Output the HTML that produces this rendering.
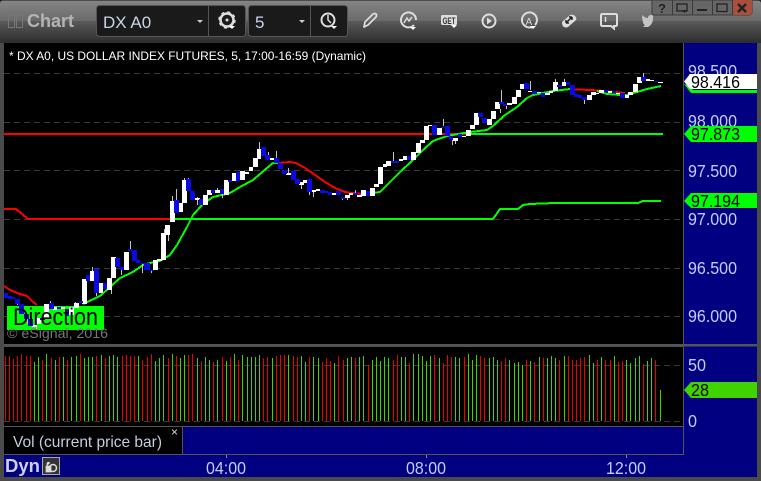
<!DOCTYPE html>
<html><head><meta charset="utf-8"><style>
html,body{margin:0;padding:0;background:#3a3a3a}
svg{display:block}
text{font-family:"Liberation Sans",sans-serif}
</style></head><body>
<svg width="761" height="481" viewBox="0 0 761 481" xmlns="http://www.w3.org/2000/svg">
<defs>
<linearGradient id="t1" x1="0" y1="0" x2="0" y2="1"><stop offset="0" stop-color="#868686"/><stop offset="1" stop-color="#6a6a6a"/></linearGradient>
<linearGradient id="t2" x1="0" y1="0" x2="0" y2="1"><stop offset="0" stop-color="#5a5a5a"/><stop offset="1" stop-color="#2c2c2c"/></linearGradient>
</defs>
<rect width="761" height="481" fill="#4a4a4a"/>
<rect y="0" width="761" height="21" fill="url(#t1)"/>
<rect y="21" width="761" height="22" fill="url(#t2)"/>
<rect y="0" width="761" height="1" fill="#4c4c4c"/>
<path d="M0 0h4q-4 0-4 4z" fill="#222"/>
<path d="M761 0h-4q4 0 4 4z" fill="#222"/>
<!-- main areas -->
<rect x="4" y="43" width="679" height="302" fill="#000"/>
<rect x="684" y="43" width="73" height="434" fill="#000080"/>
<rect x="4" y="347" width="679" height="79" fill="#000"/>
<rect x="4" y="427" width="178" height="27" fill="#000"/>
<rect x="183" y="427" width="500" height="27" fill="#000080"/>
<rect x="4" y="455" width="753" height="22" fill="#000080"/>
<rect x="4" y="344" width="753" height="2.500" fill="#555"/>
<g fill="#555"><rect x="683" y="43" width="1" height="412"/><rect x="4" y="426" width="680" height="1"/><rect x="182" y="427" width="1" height="27"/><rect x="4" y="454" width="680" height="1"/></g>
<g fill="#888"><rect x="226" y="455" width="1" height="3"/><rect x="426" y="455" width="1" height="3"/><rect x="626" y="455" width="1" height="3"/></g>
<!-- gridlines -->
<g stroke="#3a3a3a" stroke-width="1" stroke-dasharray="6 4" shape-rendering="crispEdges">
<path d="M4 73.500H683M4 122.500H683M4 170.500H683M4 219.500H683M4 268.500H683M4 316.500H683M4 365.500H683M4 421.500H683"/>
</g>
<!-- direction label bg -->
<rect x="7" y="306" width="97" height="24" fill="#00ff00"/>
<!-- MA lines -->
<g fill="none" stroke-width="2" stroke-linejoin="round" shape-rendering="crispEdges">
<path stroke="#ff0000" d="M4 209H16L28 219H172"/>
<path stroke="#00ff00" d="M172 219H493L500 209H518L523 205L530 204L555 203H638L643 201H661"/>
<path stroke="#ff0000" d="M4 134H470"/>
<path stroke="#00ff00" d="M470 134H663"/>
<path stroke="#ff0000" d="M4 286L10 290L20 294L27 296L33 302L37 305"/>
<path stroke="#ff0000" d="M278 163L290 162L296 163L305 168L315 175L325 182L335 188L345 192L352 193L362 194"/>
<path stroke="#ff0000" d="M570 89L590 90L605 91L625 93"/>
<path stroke="#00ff00" d="M83 304L100 296L110 287L120 278L133 272L143 265L150 263L160 261L170 255L177 245L187 227L193 215L203 204L213 197L230 193L240 187L253 180L267 168L273 163L278 163"/>
<path stroke="#00ff00" d="M362 194L372 193L380 192L390 182L400 172L413 160L423 150L433 141L447 136L470 132L487 130L493 126L505 115L517 107L527 98L533 95L553 91L570 89"/>
<path stroke="#00ff00" d="M597 91L607 94L620 95L627 95L637 92L647 89L661 86"/>
</g>
<!-- wicks -->
<path stroke="#c4c4c4" stroke-width="1" fill="none" shape-rendering="crispEdges" d="M50.500 301V304M92.500 267V271M121.500 270V275M130.500 241V250M142.500 264V273M151.500 270V273M75.500 302V304M168.500 235V241M164.500 229V233M176.500 189V200M172.500 196V201M184.500 178V180M188.500 178V179M197.500 197V205M217.500 188V193M222.500 194V198M259.500 142V149M268.500 152V155M276.500 151V158M288.500 168V173M301.500 185V189M313.500 192V197M309.500 192V195M342.500 197V200M347.500 198V200M355.500 190V193M393.500 152V161M443.500 119V126M452.500 140V145M455.500 141V144M500.500 109V113M501.500 90V102M506.500 106V109M530.500 81V90M555.500 79V82M564.500 79V82M584.500 100V104M643.500 73V77M17.500 302V305M27.500 319V324M36.500 326V329M111.500 290V294M96.500 293V296"/>
<!-- white bodies -->
<path fill="#fff" d="M32 325h5v2h-5zM36 318h5v6h-5zM44 304h5v14h-5zM53 307h4v3h-4zM61 307h4v2h-4zM69 307h5v8h-5zM74 303h5v5h-5zM82 279h5v25h-5zM90 271h4v10h-4zM99 283h4v10h-4zM107 278h5v12h-5zM111 257h5v21h-5zM124 252h5v18h-5zM153 260h5v10h-5zM157 259h5v2h-5zM161 233h5v27h-5zM165 225h5v10h-5zM170 201h5v21h-5zM178 203h5v9h-5zM182 180h5v23h-5zM195 198h5v2h-5zM203 195h5v10h-5zM207 190h5v5h-5zM215 190h5v3h-5zM224 180h5v15h-5zM232 173h4v8h-4zM240 171h5v9h-5zM245 172h4v2h-4zM249 167h4v4h-4zM253 158h5v9h-5zM257 149h4v10h-4zM270 158h4v2h-4zM286 173h5v2h-5zM299 182h5v3h-5zM303 180h4v3h-4zM311 190h5v2h-5zM316 189h4v2h-4zM332 193h4v2h-4zM345 195h5v3h-5zM349 193h4v2h-4zM357 195h5v2h-5zM361 190h5v6h-5zM370 188h5v8h-5zM374 184h5v3h-5zM378 167h5v17h-5zM383 164h4v3h-4zM386 161h5v5h-5zM399 159h4v2h-4zM403 156h4v4h-4zM411 152h5v8h-5zM416 143h5v10h-5zM420 140h5v3h-5zM424 126h5v14h-5zM428 125h4v1h-4zM437 128h5v7h-5zM453 138h5v3h-5zM462 136h4v1h-4zM466 130h5v6h-5zM470 125h5v4h-5zM474 113h5v12h-5zM487 119h5v6h-5zM491 111h5v8h-5zM495 102h5v7h-5zM507 103h5v2h-5zM512 97h5v7h-5zM516 90h5v7h-5zM520 84h5v5h-5zM528 91h5v1h-5zM537 92h4v1h-4zM545 93h5v2h-5zM549 91h4v2h-4zM553 82h5v9h-5zM562 82h4v4h-4zM587 95h5v5h-5zM591 92h5v3h-5zM596 93h3v1h-3zM599 90h5v3h-5zM608 91h4v2h-4zM616 93h4v1h-4zM625 95h4v3h-4zM628 92h5v3h-5zM633 84h5v8h-5zM637 77h5v6h-5zM646 79h4v2h-4zM650 80h4v1h-4zM658 82h5v1h-5z"/>
<!-- blue bodies -->
<path fill="#0a0ae6" d="M4 293h4v5h-4zM8 296h4v3h-4zM12 297h3v2h-3zM15 299h5v5h-5zM19 304h5v10h-5zM24 314h5v5h-5zM28 319h5v7h-5zM40 318h5v2h-5zM49 303h5v6h-5zM57 307h4v2h-4zM65 309h4v7h-4zM79 301h4v2h-4zM86 275h4v6h-4zM94 269h5v24h-5zM103 283h4v6h-4zM115 258h5v9h-5zM120 267h4v3h-4zM128 249h4v2h-4zM132 250h5v11h-5zM136 260h4v3h-4zM140 263h5v1h-5zM144 263h6v7h-6zM150 270h4v1h-4zM174 200h5v13h-5zM186 179h5v12h-5zM190 191h5v9h-5zM199 199h4v6h-4zM211 190h4v3h-4zM220 189h4v5h-4zM228 180h4v2h-4zM236 172h4v9h-4zM261 147h5v9h-5zM265 155h5v5h-5zM274 158h5v5h-5zM278 163h5v6h-5zM282 170h5v4h-5zM291 171h5v9h-5zM295 179h5v5h-5zM307 179h5v13h-5zM320 190h5v3h-5zM324 191h4v2h-4zM328 192h4v3h-4zM336 191h5v4h-5zM341 197h4v2h-4zM354 193h4v2h-4zM366 191h4v5h-4zM391 161h8v2h-8zM407 156h4v4h-4zM432 125h5v10h-5zM445 126h5v10h-5zM441 127h4v1h-4zM449 136h4v4h-4zM458 134h4v3h-4zM478 113h5v4h-5zM482 118h5v5h-5zM499 102h5v2h-5zM503 104h4v2h-4zM524 83h5v6h-5zM532 91h5v3h-5zM541 93h4v4h-4zM557 85h5v2h-5zM566 82h4v3h-4zM570 85h5v10h-5zM574 94h5v3h-5zM578 95h4v3h-4zM582 97h5v3h-5zM604 90h4v2h-4zM612 91h4v2h-4zM620 93h5v5h-5zM641 77h5v4h-5zM654 81h4v1h-4z"/>
<!-- volume bars -->
<path stroke="#ee0000" stroke-width="1" fill="none" shape-rendering="crispEdges" d="M5.500 421V356M9.500 421V356M13.500 421V359M17.500 421V356M21.500 421V354M26.500 421V356M30.500 421V356M42.500 421V360M51.500 421V358M59.500 421V357M67.500 421V360M80.500 421V354M96.500 421V356M105.500 421V358M122.500 421V356M126.500 421V355M130.500 421V356M134.500 421V356M142.500 421V360M147.500 421V357M151.500 421V354M168.500 421V358M176.500 421V356M188.500 421V355M192.500 421V354M201.500 421V361M213.500 421V362M222.500 421V357M230.500 421V357M238.500 421V360M263.500 421V358M267.500 421V357M276.500 421V356M280.500 421V355M284.500 421V355M293.500 421V356M297.500 421V357M309.500 421V357M322.500 421V362M326.500 421V358M330.500 421V361M338.500 421V356M343.500 421V360M355.500 421V358M368.500 421V365M393.500 421V360M397.500 421V355M409.500 421V363M434.500 421V355M443.500 421V363M447.500 421V355M451.500 421V357M464.500 421V357M480.500 421V356M484.500 421V358M501.500 421V361M505.500 421V358M526.500 421V360M534.500 421V362M543.500 421V358M559.500 421V360M568.500 421V356M572.500 421V360M576.500 421V360M580.500 421V358M584.500 421V357M597.500 421V360M605.500 421V360M610.500 421V360M618.500 421V362M622.500 421V361M643.500 421V364M655.500 421V360"/>
<path stroke="#3fd400" stroke-width="1" fill="none" shape-rendering="crispEdges" d="M34.500 421V362M38.500 421V357M46.500 421V354M55.500 421V360M63.500 421V357M71.500 421V357M76.500 421V356M84.500 421V358M88.500 421V357M92.500 421V357M101.500 421V355M109.500 421V356M113.500 421V355M117.500 421V357M138.500 421V356M155.500 421V361M159.500 421V358M163.500 421V355M172.500 421V354M180.500 421V358M184.500 421V355M197.500 421V358M205.500 421V357M209.500 421V360M217.500 421V360M226.500 421V361M234.500 421V354M242.500 421V355M247.500 421V357M251.500 421V357M255.500 421V357M259.500 421V355M272.500 421V358M288.500 421V355M301.500 421V356M305.500 421V362M313.500 421V357M318.500 421V358M334.500 421V363M347.500 421V358M351.500 421V357M359.500 421V357M363.500 421V356M372.500 421V360M376.500 421V357M380.500 421V361M384.500 421V357M388.500 421V358M401.500 421V357M405.500 421V357M413.500 421V354M418.500 421V354M422.500 421V356M426.500 421V361M430.500 421V356M439.500 421V358M455.500 421V357M459.500 421V358M468.500 421V354M472.500 421V360M476.500 421V355M489.500 421V358M493.500 421V357M497.500 421V360M509.500 421V360M514.500 421V363M518.500 421V362M522.500 421V365M530.500 421V361M539.500 421V357M547.500 421V358M551.500 421V356M555.500 421V358M564.500 421V356M589.500 421V355M593.500 421V363M601.500 421V357M614.500 421V356M626.500 421V360M630.500 421V363M635.500 421V358M639.500 421V356M647.500 421V361M651.500 421V358M660.500 421V390"/>
<!-- chart text -->
<text x="9" y="60" font-size="12" fill="#fff" textLength="357" lengthAdjust="spacingAndGlyphs">* DX A0, US DOLLAR INDEX FUTURES, 5, 17:00-16:59 (Dynamic)</text>
<text x="13" y="325" font-size="24" fill="#000" textLength="85" lengthAdjust="spacingAndGlyphs">Direction</text>
<text x="7" y="338" font-size="14" fill="#777" textLength="101" lengthAdjust="spacingAndGlyphs">© eSignal, 2016</text>
<!-- price axis -->
<g font-size="17.500" fill="#c4ccf4">
<text x="688" y="77" textLength="49" lengthAdjust="spacingAndGlyphs">98.500</text>
<text x="688" y="127" textLength="49" lengthAdjust="spacingAndGlyphs">98.000</text>
<text x="688" y="177" textLength="49" lengthAdjust="spacingAndGlyphs">97.500</text>
<text x="688" y="225" textLength="49" lengthAdjust="spacingAndGlyphs">97.000</text>
<text x="688" y="274" textLength="49" lengthAdjust="spacingAndGlyphs">96.500</text>
<text x="688" y="322" textLength="49" lengthAdjust="spacingAndGlyphs">96.000</text>
<text x="688" y="371" textLength="18" lengthAdjust="spacingAndGlyphs">50</text>
<text x="688" y="427" textLength="9" lengthAdjust="spacingAndGlyphs">0</text>
<text x="206" y="474" textLength="40" lengthAdjust="spacingAndGlyphs">04:00</text>
<text x="406" y="474" textLength="40" lengthAdjust="spacingAndGlyphs">08:00</text>
<text x="606" y="474" textLength="40" lengthAdjust="spacingAndGlyphs">12:00</text>
</g>
<!-- tags -->
<path fill="#00ff00" d="M684 84L691 93H757V90H693L690 86z"/>
<path fill="#fff" d="M684 81.500L690 74H757V89H690z"/>
<text x="691" y="88" font-size="17.500" fill="#000" textLength="49" lengthAdjust="spacingAndGlyphs">98.416</text>
<path fill="#00ff00" d="M684 134L691 126H757V142H691z"/>
<text x="691" y="140" font-size="17.500" fill="#000" textLength="49" lengthAdjust="spacingAndGlyphs">97.873</text>
<path fill="#00ff00" d="M684 201L691 193H757V208H691z"/>
<text x="691" y="207" font-size="17.500" fill="#000" textLength="49" lengthAdjust="spacingAndGlyphs">97.194</text>
<path fill="#3fd400" d="M684 390L691 382H757V398H691z"/>
<text x="691" y="396" font-size="17.500" fill="#000" textLength="18" lengthAdjust="spacingAndGlyphs">28</text>
<!-- legend -->
<text x="13" y="447" font-size="16" fill="#c4cce0" textLength="149" lengthAdjust="spacingAndGlyphs">Vol (current price bar)</text>
<text x="171" y="436" font-size="12" fill="#ddd">×</text>
<text x="5" y="472" font-size="18" font-weight="bold" fill="#cdd0e8" textLength="35" lengthAdjust="spacingAndGlyphs">Dyn</text>
<rect x="42.500" y="457.500" width="17" height="17" fill="#333" stroke="#aaa"/>
<circle cx="53" cy="468" r="3.500" fill="none" stroke="#ddd" stroke-width="1.500"/><path d="M46 466h5v6h-5zM47 466v-3a2 2 0 0 1 3 0" fill="#ddd" stroke="#ddd" stroke-width=".8"/>
<!-- toolbar -->
<rect x="8.500" y="14.500" width="6" height="13" fill="none" stroke="#777"/><rect x="16.500" y="14.500" width="6" height="13" fill="none" stroke="#777"/>
<text x="27" y="27" font-size="18" font-weight="bold" fill="#b4b4b4" textLength="47" lengthAdjust="spacingAndGlyphs">Chart</text>
<rect x="96.500" y="5.500" width="149" height="31" rx="3" fill="#1a1a1a" stroke="#555"/>
<rect x="208" y="6" width="1" height="30" fill="#555"/>
<rect x="248.500" y="5.500" width="99" height="31" rx="3" fill="#1a1a1a" stroke="#555"/>
<rect x="310" y="6" width="1" height="30" fill="#555"/>
<text x="103" y="28" font-size="17" fill="#c8d4e8">DX A0</text>
<text x="255" y="28" font-size="17" fill="#c8d4e8">5</text>
<path fill="#ccc" d="M197 20h6l-3 3zM299 20h6l-3 3z"/>
<!-- gear -->
<circle cx="227" cy="20" r="6.500" fill="none" stroke="#ddd" stroke-width="2.500"/>
<circle cx="227" cy="20" r="8" fill="none" stroke="#ddd" stroke-width="1.500" stroke-dasharray="3 3.300"/>
<circle cx="227" cy="20" r="1.500" fill="#ddd"/>
<path fill="#fff" d="M229 26h6l-3 3z"/>
<!-- clock -->
<circle cx="328" cy="20" r="6.500" fill="none" stroke="#ddd" stroke-width="2"/><path d="M328 15v5l3 3" fill="none" stroke="#ddd" stroke-width="1.500"/>
<path fill="#fff" d="M331 26h6l-3 3z"/>
<!-- pencil -->
<path d="M364 27l1-5 8-8q2-1 3 0t0 3l-8 8z" fill="none" stroke="#ddd" stroke-width="1.800" stroke-linejoin="round"/>
<!-- chart circle -->
<path d="M414 25a7.500 7.500 0 1 1 2-5" fill="none" stroke="#ddd" stroke-width="2"/><path d="M404 23l3-5 2 3 3-4" fill="none" stroke="#ddd" stroke-width="1.500"/>
<path fill="#fff" d="M410 27h6l-3 3z"/>
<!-- GET -->
<rect x="441" y="15" width="16" height="10" rx="1.500" fill="#ddd"/>
<text x="442.500" y="24" font-size="9" font-weight="bold" fill="#333" textLength="13" lengthAdjust="spacingAndGlyphs">GET</text>
<path fill="#fff" d="M451 25h6l-3 3z"/>
<!-- play -->
<circle cx="489" cy="21" r="6.500" fill="none" stroke="#ddd" stroke-width="2"/><path d="M487 17.500v7l5-3.500z" fill="#ddd"/>
<!-- A circle -->
<path d="M535 25a7.500 7.500 0 1 0-3 2" fill="none" stroke="#ddd" stroke-width="2"/>
<text x="525.500" y="25" font-size="10" fill="#ddd">A</text>
<path fill="#fff" d="M530 26h6l-3 3z"/>
<!-- diamond -->
<path d="M562 22l8-7q3-1 5 1t1 4l-8 7q-2 1-4 0t-2-5z" fill="#ddd"/><path d="M566 23l6-6M572 17h-3M572 17v3M566 23h3M566 23v-3" stroke="#222" stroke-width="1.500" fill="none"/>
<!-- speech -->
<path d="M602.500 14h13q1.500 0 1.500 1.500v9q0 1.500-1.500 1.500h-1.500v2.500l-3-2.500h-8.500q-1.500 0-1.500-1.500v-9q0-1.500 1.500-1.500z" fill="none" stroke="#ddd" stroke-width="2"/><path d="M605.500 17v5" stroke="#ddd" stroke-width="1.500"/>
<!-- twitter -->
<path d="M642 15q3 3 6 3 0-3 3-3l2 .5v3q0 6-5 8.500h-5l2-2q-2-1-2-3 -1-3-1-7z" fill="#c4c4c4"/>
<!-- window buttons -->
<path d="M652 0h100v12q0 3-3 3h-94q-3 0-3-3z" fill="#666" stroke="#3a3a3a"/>
<path d="M732 0h20v12q0 3-3 3h-17z" fill="#a8503c"/>
<path stroke="#3a3a3a" d="M672.500 0v15M692.500 0v15M712.500 0v15M732.500 0v15"/>
<text x="658" y="13" font-size="13" font-weight="bold" fill="#222">?</text>
<rect x="677" y="4" width="10" height="7" fill="none" stroke="#222" stroke-width="1.300"/><path d="M682 10h5l-2.500 3z" fill="#222"/>
<rect x="697" y="9" width="10" height="2" fill="#222"/>
<rect x="717" y="4" width="10" height="7.500" fill="none" stroke="#222" stroke-width="1.300"/>
<path d="M738 4l8 8M746 4l-8 8" stroke="#222" stroke-width="2.400"/>
</svg>
</body></html>
